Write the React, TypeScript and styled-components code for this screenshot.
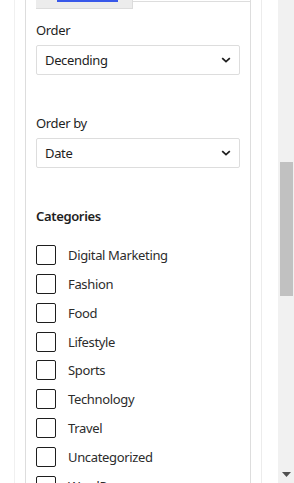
import * as React from "react";
import styled, { createGlobalStyle } from "styled-components";

const GlobalStyle = createGlobalStyle`
  html, body {
    margin: 0;
    padding: 0;
    overflow: hidden;
    background: #ffffff;
  }
  body {
    font-family: "Noto Sans", "Open Sans", Arial, sans-serif;
    color: #1e1e1e;
    letter-spacing: -0.35px;
  }
`;

const categories = [
  "Digital Marketing",
  "Fashion",
  "Food",
  "Lifestyle",
  "Sports",
  "Technology",
  "Travel",
  "Uncategorized",
  "WordPress",
];

function Chevron() {
  return (
    <svg width="12" height="12" viewBox="0 0 12 12" fill="none">
      <path
        d="M2.8 4.6 L6 7.6 L9.2 4.6"
        stroke="#1e1e1e"
        strokeWidth="1.7"
        strokeLinecap="square"
      />
    </svg>
  );
}

function Select(props: { label: string; value: string }) {
  return (
    <Field>
      <Label>{props.label}</Label>
      <SelectBox>
        <span>{props.value}</span>
        <Chevron />
      </SelectBox>
    </Field>
  );
}

export default function App() {
  return (
    <>
      <GlobalStyle />
      <Page>
        <Main>
          <Frame>
            <Panel>
              <TabRow>
                <TabBox>
                  <ActiveBar />
                </TabBox>
                <TabRest />
              </TabRow>
              <Body>
                <Select label="Order" value="Decending" />
                <Select label="Order by" value="Date" />
                <SectionTitle>Categories</SectionTitle>
                <CheckList>
                  {categories.map((c) => (
                    <CheckRow key={c}>
                      <Box />
                      <CheckLabel>{c}</CheckLabel>
                    </CheckRow>
                  ))}
                </CheckList>
              </Body>
            </Panel>
          </Frame>
        </Main>
        <Scrollbar>
          <Track>
            <Thumb />
          </Track>
          <ArrowDown>
            <svg width="9" height="5" viewBox="0 0 9 5">
              <path d="M0 0 H9 L4.5 5 Z" fill="#505050" />
            </svg>
          </ArrowDown>
        </Scrollbar>
      </Page>
    </>
  );
}

const Page = styled.div`
  display: flex;
  width: 294px;
  height: 483px;
  overflow: hidden;
`;

const Main = styled.div`
  width: 278px;
  padding-left: 14px;
  box-sizing: border-box;
  display: flex;
`;

const Frame = styled.div`
  width: 248px;
  box-sizing: border-box;
  border-left: 1px solid #f0f0f0;
  border-right: 1px solid #ececec;
  padding-left: 10px;
  display: flex;
`;

const Panel = styled.div`
  width: 226px;
  box-sizing: border-box;
  border-left: 1px solid #dddddd;
  border-right: 1px solid #dddddd;
  display: flex;
  flex-direction: column;
`;

const TabRow = styled.div`
  display: flex;
  align-items: flex-start;
  padding-left: 10px;
`;

const TabBox = styled.div`
  width: 97px;
  height: 9px;
  box-sizing: border-box;
  background: #ececec;
  border-right: 1px solid #dcdcdc;
  border-bottom: 1px solid #dcdcdc;
  padding-left: 21px;
`;

const ActiveBar = styled.div`
  width: 61px;
  height: 2px;
  background: #3858e9;
`;

const TabRest = styled.div`
  flex: 1;
  margin-top: 1px;
  border-top: 1px solid #dddddd;
`;

const Body = styled.div`
  padding: 12px 10px 0 10px;
  display: flex;
  flex-direction: column;
`;

const Field = styled.div`
  display: flex;
  flex-direction: column;
  margin-bottom: 39px;
`;

const Label = styled.div`
  font-size: 13px;
  line-height: 18px;
  margin-bottom: 6px;
`;

const SelectBox = styled.div`
  height: 30px;
  box-sizing: border-box;
  border: 1px solid #dddddd;
  border-radius: 2px;
  padding: 0 7px 0 8px;
  display: flex;
  align-items: center;
  justify-content: space-between;
  font-size: 13px;
`;

const SectionTitle = styled.div`
  font-size: 13px;
  font-weight: 600;
  line-height: 18px;
  margin-bottom: 20px;
`;

const CheckList = styled.div`
  display: flex;
  flex-direction: column;
  gap: 8.85px;
`;

const CheckRow = styled.div`
  display: flex;
  align-items: center;
  gap: 12px;
  height: 20px;
`;

const Box = styled.div`
  width: 20px;
  height: 20px;
  box-sizing: border-box;
  border: 1.5px solid #1e1e1e;
  border-radius: 2px;
  flex: none;
`;

const CheckLabel = styled.span`
  font-size: 13px;
  color: #2c2c2c;
`;

const Scrollbar = styled.div`
  width: 16px;
  background: #f1f1f1;
  display: flex;
  flex-direction: column;
  align-items: center;
`;

const Track = styled.div`
  flex: 1;
  width: 100%;
  padding-top: 162px;
  display: flex;
  justify-content: center;
  box-sizing: border-box;
`;

const Thumb = styled.div`
  width: 13px;
  height: 134px;
  background: #c1c1c1;
  margin-left: 1px;
`;

const ArrowDown = styled.div`
  height: 17px;
  display: flex;
  align-items: center;
  justify-content: center;
  padding-left: 1px;
`;
